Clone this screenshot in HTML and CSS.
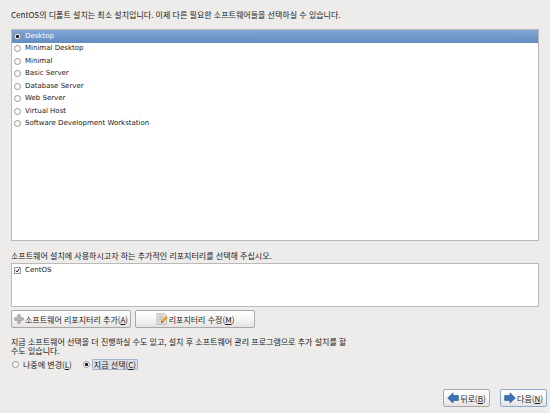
FILE: index.html
```html
<!DOCTYPE html>
<html lang="ko">
<head>
    <meta charset="UTF-8">
    <meta name="viewport" content="width=device-width, initial-scale=1.0">
    <title>CentOS 설치</title>
    <link rel="stylesheet" href="styles.css">
</head>
<body>
    <form class="installer">
        <p class="intro" id="intro">CentOS의 디폴트 설치는 최소 설치입니다. 이제 다른 필요한 소프트웨어들을 선택하실 수 있습니다.</p>

        <!-- Software sets -->
        <div class="list task-list">
            <div class="tasks" role="radiogroup" aria-labelledby="intro">
                <label class="row"><input type="radio" name="task" checked>Desktop</label>
                <label class="row"><input type="radio" name="task">Minimal Desktop</label>
                <label class="row"><input type="radio" name="task">Minimal</label>
                <label class="row"><input type="radio" name="task">Basic Server</label>
                <label class="row"><input type="radio" name="task">Database Server</label>
                <label class="row"><input type="radio" name="task">Web Server</label>
                <label class="row"><input type="radio" name="task">Virtual Host</label>
                <label class="row"><input type="radio" name="task">Software Development Workstation</label>
            </div>
        </div>

        <!-- Repositories -->
        <p class="repo-text">소프트웨어 설치에 사용하시고자 하는 추가적인 리포지터리를 선택해 주십시오.</p>
        <div class="list repo-list">
            <label class="row"><input type="checkbox" checked>CentOS</label>
        </div>
        <div class="repo-buttons">
            <button type="button" class="btn">
                <svg class="icon-add" viewBox="0 0 10 10"><path d="M3.8.8h2.400v3h3v2.400h-3v3H3.800v-3h-3V3.800h3z" fill="#b9bbb8" stroke="#8c8e8b" stroke-width=".7"/></svg>
                <span>소프트웨어 리포지터리 추가(<u>A</u>)</span>
            </button>
            <button type="button" class="btn">
                <svg class="icon-edit" viewBox="0 0 12 12"><path d="M1 .8h7.500l2 2v8.500H1z" fill="#e6e7e4" stroke="#a4a6a2" stroke-width=".7"/><path d="M2.500 3h5M2.500 4.800h5M2.500 6.600h3.500M2.500 8.400h2" stroke="#a4a6a2" stroke-width=".7"/><path d="M5 9.900l.6-2.400 4.400-4.500 1.900 1.700-4.500 4.600z" fill="#f59a23"/><path d="M5 9.900l.6-2.400 1.800 1.800z" fill="#6b6250"/></svg>
                <span>리포지터리 수정(<u>M</u>)</span>
            </button>
        </div>

        <!-- Customize now or later -->
        <p class="customize-text" id="customize">지금 소프트웨어 선택을 더 진행하실 수도 있고, 설치 후 소프트웨어 관리 프로그램으로 추가 설치를 할 수도 있습니다.</p>
        <div class="customize" role="radiogroup" aria-labelledby="customize">
            <label><input type="radio" name="customize"><span>나중에 변경(<u>L</u>)</span></label>
            <label><input type="radio" name="customize" checked><span class="focused">지금 선택(<u>C</u>)</span></label>
        </div>

        <div class="nav">
            <button type="button" class="btn">
                <svg class="icon-arrow" viewBox="0 0 12 12"><path d="M.7 6L6 .9v2.700h5.300v4.800H6v2.700z" fill="#3c74b8" stroke="#28548c" stroke-width=".7"/></svg>
                <span>뒤로(<u>B</u>)</span>
            </button>
            <button type="submit" class="btn btn-default">
                <svg class="icon-arrow" viewBox="0 0 12 12"><path d="M11.300 6L6 .9v2.700H.7v4.800H6v2.700z" fill="#3c74b8" stroke="#28548c" stroke-width=".7"/></svg>
                <span>다음(<u>N</u>)</span>
            </button>
        </div>
    </form>
</body>
</html>
```

FILE: styles.css
```css
* {
    box-sizing: border-box;
}

body {
    margin: 0;
    background: #edeceb;
    color: #1a1a1a;
    font-family: "Noto Sans CJK KR", sans-serif;
    font-size: 8px;
    line-height: 9px;
}

p {
    margin: 0;
}

.installer {
    display: flex;
    flex-direction: column;
    min-height: 100vh;
    padding: 10px 11px 6px;
}

/* White list boxes */
.list {
    background: #fff;
    border: 1px solid #bcbab8;
    font-family: "DejaVu Sans", sans-serif;
    font-size: 7px;
}

.row {
    display: flex;
    align-items: center;
    gap: 4px;
    min-height: 12px;
    padding-left: 2px;
}

.task-list {
    flex: 1;
    margin: 10px 0;
}

.tasks {
    display: grid;
    grid-template-rows: repeat(8, 1fr);
    height: 100px;
}

.tasks .row:has(:checked) {
    background: linear-gradient(#7fa5d6, #628cc0);
    color: #fff;
}

.repo-list {
    height: 44px;
    margin-top: 3px;
}

/* Radios and tick boxes */
input {
    appearance: none;
    flex: none;
    width: 7px;
    height: 7px;
    margin: 0;
    border: 1px solid #969492;
    background: #fff;
}

input[type="radio"] {
    border-radius: 50%;
}

input[type="radio"]:checked {
    background: radial-gradient(circle, #111 35%, #fff 55%);
}

input[type="checkbox"]:checked {
    background: #fff url("data:image/svg+xml,%3Csvg xmlns='http://www.w3.org/2000/svg' viewBox='0 0 6 6'%3E%3Cpath d='M1 3l1.500 1.800L5.200.8' fill='none' stroke='%23111' stroke-width='1.200'/%3E%3C/svg%3E");
}

/* Buttons */
.btn {
    display: flex;
    justify-content: center;
    align-items: center;
    gap: 1px;
    height: 18px;
    padding: 0;
    border: 1px solid #aaa8a6;
    border-radius: 2px;
    background: linear-gradient(#fff, #f6f5f4 50%, #e4e3e1);
    color: inherit;
    font: inherit;
    white-space: nowrap;
}

.btn-default {
    border-color: #8aa8d0;
}

.repo-buttons {
    display: flex;
    gap: 4px;
    margin-top: 3px;
}

.repo-buttons .btn {
    width: 120px;
}

.icon-add {
    width: 10px;
    height: 10px;
}

.icon-edit,
.icon-arrow {
    width: 12px;
    height: 12px;
}

/* Customize choice */
.customize-text {
    max-width: 340px;
    margin-top: 9px;
    word-break: keep-all;
}

.customize {
    display: flex;
    gap: 9px;
    margin-top: 4px;
    padding-left: 1px;
}

.customize label {
    display: flex;
    align-items: center;
    gap: 2px;
}

.customize span {
    padding: 0 1px;
    border: 1px solid transparent;
}

.customize .focused {
    border-color: #9db4d3;
    border-radius: 1px;
    background: #d9e0ea;
}

/* Back and next */
.nav {
    display: flex;
    justify-content: flex-end;
    gap: 10px;
    margin: 19px -8px 0 0;
}

.nav .btn {
    width: 47px;
}
```
